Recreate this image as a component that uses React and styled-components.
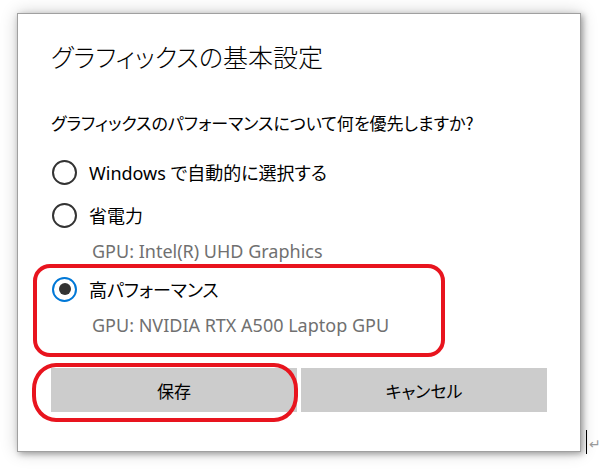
import { createGlobalStyle, styled } from 'styled-components';

const GlobalStyle = createGlobalStyle`
    html, body {
        margin: 0;
        background: #ffffff;
    }
    body {
        font-family: "Noto Sans", "Noto Sans CJK JP", sans-serif;
        color: #000000;
    }
`;

const Desk = styled.div`
    position: relative;
    width: 602px;
    height: 469px;
    padding: 13px 0 0 17px;
    box-sizing: border-box;
    overflow: hidden;
`;

const Dialog = styled.div`
    width: 564px;
    height: 439px;
    box-sizing: border-box;
    border: 1px solid #a0a0a0;
    background: #ffffff;
    box-shadow: 2px 2px 6px rgba(0, 0, 0, 0.32), 0 0 16px rgba(0, 0, 0, 0.2);
    padding: 0 33px;
    display: flex;
    flex-direction: column;
`;

const Title = styled.h1`
    margin: 27px 0 0 0;
    font-family: "Noto Sans CJK JP", sans-serif;
    font-feature-settings: "palt";
    font-size: 25px;
    line-height: 30px;
    font-weight: 300;
`;

const Question = styled.p`
    margin: 40px 0 0 0;
    font-family: "Noto Sans CJK JP", sans-serif;
    font-feature-settings: "palt";
    font-size: 17px;
    line-height: 24px;
`;

const Options = styled.div`
    margin-top: 22px;
    display: flex;
    flex-direction: column;
`;

const Choice = styled.div`
    position: relative;
    margin-top: ${p => p.$gap}px;
`;

const Row = styled.label`
    display: flex;
    align-items: center;
    gap: 12px;
    height: 30px;
    font-family: "Noto Sans", "Noto Sans CJK JP", sans-serif;
    font-feature-settings: "palt";
    font-size: 18px;
`;

const Radio = styled.span`
    width: 25px;
    height: 25px;
    margin-left: 1px;
    box-sizing: border-box;
    border-radius: 50%;
    border: 2.5px solid ${p => (p.$checked ? '#0078d7' : '#333333')};
    display: flex;
    align-items: center;
    justify-content: center;
    flex-shrink: 0;

    &::after {
        content: "";
        display: ${p => (p.$checked ? 'block' : 'none')};
        width: 12px;
        height: 12px;
        border-radius: 50%;
        background: #333333;
    }
`;

const Gpu = styled.div`
    margin: 10px 0 0 41px;
    font-family: "Noto Sans", sans-serif;
    font-size: 18px;
    line-height: 22px;
    color: #707070;
`;

const Highlight = styled.span`
    position: absolute;
    top: -10px;
    left: -18px;
    width: 412px;
    height: 93px;
    box-sizing: border-box;
    border: 4px solid #e8141e;
    border-radius: 17px;
    pointer-events: none;
`;

const Buttons = styled.div`
    margin-top: 32px;
    display: grid;
    grid-template-columns: 1fr 1fr;
    gap: 4px;
`;

const ButtonSlot = styled.div`
    position: relative;
`;

const Button = styled.button`
    width: 100%;
    height: 44px;
    border: none;
    background: #cccccc;
    font-family: "Noto Sans CJK JP", sans-serif;
    font-feature-settings: "palt";
    font-size: 17px;
    color: #000000;
    padding: 0;
`;

const Ring = styled.span`
    position: absolute;
    top: -5px;
    left: -19px;
    width: 266px;
    height: 59px;
    box-sizing: border-box;
    border: 4px solid #e8141e;
    border-radius: 24px / 26px;
    pointer-events: none;
`;

const Caret = styled.span`
    position: absolute;
    left: 586px;
    top: 430px;
    width: 1px;
    height: 24px;
    background: #000000;
`;

const Return = styled.span`
    position: absolute;
    left: 589px;
    top: 436px;
    font-family: "DejaVu Sans", sans-serif;
    font-size: 14px;
    color: #9a9a9a;
`;

const GraphicsDialog = () => {
    return (
        <>
            <GlobalStyle />
            <Desk>
                <Dialog>
                    <Title>グラフィックスの基本設定</Title>
                    <Question>グラフィックスのパフォーマンスについて何を優先しますか?</Question>
                    <Options>
                        <Choice $gap={0}>
                            <Row><Radio />Windows で自動的に選択する</Row>
                        </Choice>
                        <Choice $gap={13}>
                            <Row><Radio />省電力</Row>
                            <Gpu>GPU: Intel(R) UHD Graphics</Gpu>
                        </Choice>
                        <Choice $gap={12}>
                            <Row><Radio $checked />高パフォーマンス</Row>
                            <Gpu>GPU: NVIDIA RTX A500 Laptop GPU</Gpu>
                            <Highlight />
                        </Choice>
                    </Options>
                    <Buttons>
                        <ButtonSlot>
                            <Button>保存</Button>
                            <Ring />
                        </ButtonSlot>
                        <ButtonSlot>
                            <Button>キャンセル</Button>
                        </ButtonSlot>
                    </Buttons>
                </Dialog>
                <Caret />
                <Return>↵</Return>
            </Desk>
        </>
    );
};

export default GraphicsDialog;
